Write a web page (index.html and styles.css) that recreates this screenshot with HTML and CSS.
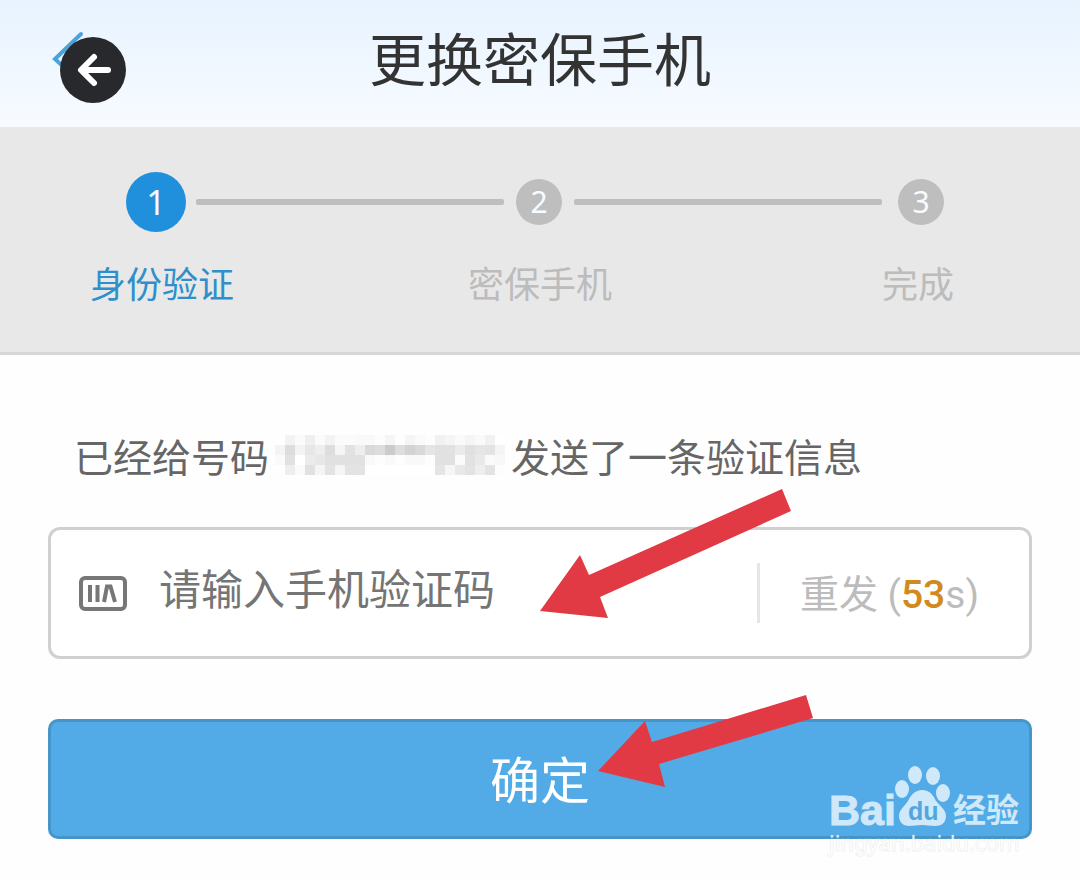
FILE: index.html
```html
<!DOCTYPE html>
<html lang="zh-CN">
<head>
<meta charset="utf-8">
<meta name="viewport" content="width=device-width, initial-scale=1">
<title>更换密保手机</title>
<link rel="stylesheet" href="styles.css">
</head>
<body>
<header class="header">
  <h1 class="title">更换密保手机</h1>
  <button class="back" type="button" aria-label="返回">
    <svg width="76" height="74" viewBox="0 0 76 74" aria-hidden="true">
      <path d="M31 5 5 30 31 54" fill="none" stroke="#4ba3dc" stroke-width="4" stroke-linecap="round"/>
      <circle cx="43" cy="41" r="33" fill="#28292d"/>
      <path d="M58 41H32M44 28 31 41l13 13" fill="none" stroke="#fff" stroke-width="6" stroke-linecap="round" stroke-linejoin="round"/>
    </svg>
  </button>
</header>

<section class="steps" aria-label="步骤">
  <div class="track">
    <span class="dot dot-active">1</span>
    <span class="line"></span>
    <span class="dot">2</span>
    <span class="line line-last"></span>
    <span class="dot">3</span>
  </div>
  <div class="labels">
    <span class="label label-active">身份验证</span>
    <span class="label label-middle">密保手机</span>
    <span class="label label-last">完成</span>
  </div>
</section>

<main class="main">
  <form class="form">
    <p class="message">
      <label for="code">已经给号码</label>
      <svg class="mosaic" id="mosaic" width="230" height="40" viewBox="0 0 23 4" shape-rendering="crispEdges" role="img" aria-label="手机号码"></svg>
      <span>发送了一条验证信息</span>
    </p>
    <div class="field">
      <svg class="field-icon" width="48" height="35" viewBox="0 0 48 35" aria-hidden="true">
        <rect x="2" y="2" width="44" height="31" rx="4" fill="none" stroke="#777" stroke-width="4"/>
        <path d="M11 9v17M18.500 9v17M25 26l3-15.500h3.500L36 26" fill="none" stroke="#777" stroke-width="4"/>
      </svg>
      <input class="input" id="code" type="text" placeholder="请输入手机验证码">
      <button class="resend" type="button">重发 (<span class="seconds">53</span>s)</button>
    </div>
    <button class="submit" type="button">确定</button>
  </form>

  <svg class="arrow arrow-input" width="252" height="130" viewBox="0 0 252 130" aria-hidden="true">
    <path d="M0 122 40 66l9 20L242 0l9 22L60 108l8 21Z" fill="#e23a44"/>
  </svg>
  <svg class="arrow arrow-submit" width="216" height="93" viewBox="0 0 216 93" aria-hidden="true">
    <path d="M0 76 47 26l7 21L208 0l7 23L61 69l6 23Z" fill="#e23a44"/>
  </svg>
  <svg class="watermark" width="200" height="96" viewBox="0 0 200 96" role="img" aria-label="Baidu 经验 jingyan.baidu.com">
    <g class="mark">
      <text class="mark-latin" x="1" y="59">Bai</text>
      <ellipse cx="74" cy="23" rx="7" ry="9"/>
      <ellipse cx="87" cy="9" rx="7" ry="9"/>
      <ellipse cx="105" cy="10" rx="7" ry="9"/>
      <ellipse cx="115" cy="27" rx="7" ry="9"/>
      <path d="M94 24c8 0 11 5 14 11 5 6 10 9 10 15 0 7-5 10-11 10-5 0-8-1-13-1s-8 1-13 1c-6 0-10-4-10-10 0-6 5-9 9-15 3-6 7-11 14-11Z"/>
      <text class="mark-du" x="80" y="54">du</text>
      <text class="mark-cjk" x="125" y="56">经验</text>
    </g>
    <text class="mark-url" x="1" y="85">jingyan.baidu.com</text>
  </svg>
</main>
<script src="mosaic.js"></script>
</body>
</html>
```
FILE: mosaic.js
```js
// Grey levels of the masked phone number, one hex pair per cell.
const rows = [
  "ff f3 fb ef fb f3 fb fb f9 f9 fd f5 fd f5 fa fd f1 f5 fa f5 fa f1 ff",
  "f4 dd f3 e7 ee dd f5 e2 ee d9 dd cb dd d3 d9 e5 e1 e1 eb e0 e5 e3 f5",
  "fa e1 ff eb e7 e1 e1 e1 e1 f9 fd f9 fd f9 f9 fd e1 e1 fb e2 e9 fa f8",
  "ff ee fa e1 f5 e3 f5 e3 e3 ff ff ff ff ff ff ff e5 f6 e9 e3 ee e3 fd"
];
const mosaic = document.getElementById("mosaic");
rows.forEach((row, y) => row.split(" ").forEach((v, x) => {
  const cell = document.createElementNS("http://www.w3.org/2000/svg", "rect");
  cell.setAttribute("x", x);
  cell.setAttribute("y", y);
  cell.setAttribute("width", 1);
  cell.setAttribute("height", 1);
  cell.setAttribute("fill", "#" + v + v + v);
  mosaic.appendChild(cell);
}));
```
FILE: styles.css
```css
* {
  box-sizing: border-box;
}

body {
  margin: 0;
  background: #fefefe;
  font-family: "Noto Sans CJK SC", sans-serif;
}

button {
  padding: 0;
  border: 0;
  background: none;
  font: inherit;
}

.header {
  position: relative;
  padding: 14px 0 29px;
  background: linear-gradient(#e8f3ff, #f7fbff);
  text-align: center;
}

.title {
  margin: 0;
  color: #333;
  font-size: 57px;
  font-weight: 400;
  line-height: 84px;
}

.back {
  position: absolute;
  top: 29px;
  left: 50px;
  height: 74px;
}

.steps {
  padding: 45px 0 44px;
  border-bottom: 3px solid #d6d6d6;
  background: #e8e8e8;
}

.track {
  display: flex;
  align-items: center;
  padding: 0 136px 0 126px;
}

.dot {
  width: 46px;
  height: 46px;
  border-radius: 50%;
  background: #bebebe;
  color: #f8fbff;
  font: 30px/46px "Noto Sans", sans-serif;
  text-align: center;
}

.dot-active {
  width: 60px;
  height: 60px;
  background: #2090dc;
  font-size: 34px;
  line-height: 60px;
}

.line {
  flex: 1;
  height: 6px;
  margin: 0 12px 0 10px;
  border-radius: 2px;
  background: #bebebe;
}

.line-last {
  margin: 0 16px 0 12px;
}

.labels {
  display: grid;
  grid-template-columns: 1fr auto 1fr;
  margin-top: 24px;
  color: #bcbcbc;
  font-size: 36px;
  line-height: 52px;
}

.label-active {
  padding-left: 90px;
  color: #2f8fca;
}

.label-last {
  padding-right: 126px;
  text-align: right;
}

.main {
  position: relative;
  padding: 72px 48px 41px;
}

.message {
  display: flex;
  align-items: center;
  gap: 6px;
  margin: 0 0 44px;
  padding-left: 26px;
  color: #666;
  font-size: 39px;
  line-height: 56px;
}

.message > * {
  flex: none;
}

.field {
  display: flex;
  align-items: center;
  height: 132px;
  padding: 0 50px 0 28px;
  border: 3px solid #d0d0d0;
  border-radius: 12px;
  background: #fff;
}

.field-icon {
  flex: none;
}

.input {
  flex: 1;
  min-width: 0;
  height: 76px;
  margin-left: 32px;
  padding: 0 0 14px;
  border: 0;
  outline: 0;
  background: none;
  color: #757575;
  font: 42px/62px "Noto Sans CJK SC", sans-serif;
}

.input::placeholder {
  color: #757575;
}

.resend {
  height: 60px;
  padding: 4px 0 0 40px;
  border-left: 3px solid #e6e6e6;
  color: #bcbcbc;
  font: 39px/56px Roboto, "Noto Sans CJK SC", sans-serif;
}

.seconds {
  color: #d18a20;
  font-weight: 500;
}

.submit {
  display: block;
  width: 100%;
  height: 120px;
  margin-top: 60px;
  padding-bottom: 4px;
  border: 3px solid #4595c8;
  border-radius: 10px;
  background: #52abe6;
  color: #fff;
  font-size: 50px;
  line-height: 74px;
}

.arrow {
  position: absolute;
  left: 50%;
}

.arrow-input {
  top: 134px;
}

.arrow-submit {
  top: 340px;
  margin-left: 58px;
}

.watermark {
  position: absolute;
  top: 411px;
  right: 52px;
  overflow: visible;
}

.mark {
  fill: #cfe8fa;
}

.mark-latin {
  stroke: #cfe8fa;
  font: bold 43px "Liberation Sans", sans-serif;
}

.mark-du {
  fill: #52a6de;
  font: bold 25px "Liberation Sans", sans-serif;
}

.mark-cjk {
  font: bold 33px "Noto Sans CJK SC", sans-serif;
}

.mark-url {
  fill: #fff;
  fill-opacity: 0.8;
  stroke: #c8c8c8;
  stroke-opacity: 0.4;
  stroke-width: 1px;
  paint-order: stroke;
  font: 22px "Noto Sans", sans-serif;
}
```
